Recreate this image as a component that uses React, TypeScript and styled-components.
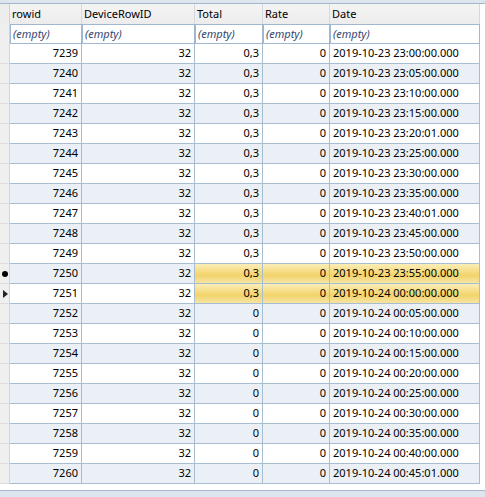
import React from "react";
import styled, { createGlobalStyle, css } from "styled-components";

const GlobalStyle = createGlobalStyle`
  html, body { margin: 0; padding: 0; background: #ffffff; }
  body { font-family: "Noto Sans", "Open Sans", sans-serif; font-size: 11px; color: #000; }
`;

const Frame = styled.div`
  width: 485px;
  height: 497px;
  display: flex;
  flex-direction: column;
  background: #ffffff;
  overflow: hidden;
`;

const TopStrip = styled.div`
  height: 3px;
  background: #dde5ee;
  border-bottom: 1px solid #a5b6c8;
`;

const Grid = styled.div`
  display: grid;
  grid-template-columns: 10px 72px 113px 68px 67px 150px;
  width: 480px;
`;

const HeaderCell = styled.div<{ $indicator?: boolean }>`
  box-sizing: border-box;
  height: 20px;
  line-height: 19px;
  padding-left: 2px;
  background: linear-gradient(#f4f4f4, #ececec);
  border-right: 1px solid #d5d9de;
  white-space: nowrap;
  overflow: hidden;
  ${(p) => p.$indicator && css`background: #ededed; border-right: 1px solid #d2d2d2;`}
`;

const FilterCell = styled.div<{ $indicator?: boolean }>`
  box-sizing: border-box;
  height: 20px;
  line-height: 18px;
  padding-left: 2px;
  background: #ffffff;
  border: 1px solid #9fb7cf;
  font-style: italic;
  color: #34456f;
  white-space: nowrap;
  overflow: hidden;
  ${(p) => p.$indicator && css`background: #efefef; border: none; border-right: 1px solid #d2d2d2;`}
`;

const IndicatorCell = styled.div`
  box-sizing: border-box;
  height: 20px;
  background: #efefef;
  border-right: 1px solid #d4d4d4;
  border-bottom: 1px solid #dcdcdc;
  display: flex;
  align-items: center;
  justify-content: center;
  font-size: 9px;
  line-height: 1;
`;

const DataCell = styled.div<{ $alt: boolean; $right?: boolean; $hl?: boolean }>`
  box-sizing: border-box;
  height: 20px;
  line-height: 18px;
  padding: 0 3px;
  background: ${(p) => (p.$alt ? "#eaf0f6" : "#ffffff")};
  border-right: 1px solid #a9bdd1;
  border-bottom: 1px solid #a9bdd1;
  text-align: ${(p) => (p.$right ? "right" : "left")};
  white-space: nowrap;
  overflow: hidden;
  ${(p) =>
    p.$hl &&
    css`
      background: linear-gradient(#fbeeb8 0%, #f5da7c 45%, #f2d46c 60%, #f7e4a4 100%);
    `}
`;

const Dot = styled.span`
  display: block;
  width: 6px;
  height: 6px;
  border-radius: 50%;
  background: #000;
`;

const Tri = styled.span`
  display: block;
  width: 0;
  height: 0;
  border-top: 4px solid transparent;
  border-bottom: 4px solid transparent;
  border-left: 5px solid #222;
  margin-left: 1px;
`;

const Spacer = styled.div`
  flex: 1;
`;

const Footer = styled.div`
  height: 6px;
  background: #dde6ef;
  border-top: 1px solid #a9b9ca;
`;

type Row = { id: number; total: string; date: string };

const dates = [
  "2019-10-23 23:00:00.000",
  "2019-10-23 23:05:00.000",
  "2019-10-23 23:10:00.000",
  "2019-10-23 23:15:00.000",
  "2019-10-23 23:20:01.000",
  "2019-10-23 23:25:00.000",
  "2019-10-23 23:30:00.000",
  "2019-10-23 23:35:00.000",
  "2019-10-23 23:40:01.000",
  "2019-10-23 23:45:00.000",
  "2019-10-23 23:50:00.000",
  "2019-10-23 23:55:00.000",
  "2019-10-24 00:00:00.000",
  "2019-10-24 00:05:00.000",
  "2019-10-24 00:10:00.000",
  "2019-10-24 00:15:00.000",
  "2019-10-24 00:20:00.000",
  "2019-10-24 00:25:00.000",
  "2019-10-24 00:30:00.000",
  "2019-10-24 00:35:00.000",
  "2019-10-24 00:40:00.000",
  "2019-10-24 00:45:01.000",
];

const rows: Row[] = dates.map((d, i) => ({
  id: 7239 + i,
  total: 7239 + i <= 7251 ? "0,3" : "0",
  date: d,
}));

const headers = ["rowid", "DeviceRowID", "Total", "Rate", "Date"];

export default function App() {
  return (
    <>
      <GlobalStyle />
      <Frame>
        <TopStrip />
        <Grid>
          <HeaderCell $indicator />
          {headers.map((h) => (
            <HeaderCell key={h}>{h}</HeaderCell>
          ))}
          <FilterCell $indicator />
          {headers.map((h) => (
            <FilterCell key={h}>(empty)</FilterCell>
          ))}
          {rows.map((r, i) => {
            const alt = i % 2 === 1;
            const hl = r.id === 7250 || r.id === 7251;
            return (
              <React.Fragment key={r.id}>
                <IndicatorCell>
                  {r.id === 7250 ? <Dot /> : r.id === 7251 ? <Tri /> : null}
                </IndicatorCell>
                <DataCell $alt={alt} $right>{r.id}</DataCell>
                <DataCell $alt={alt} $right>32</DataCell>
                <DataCell $alt={alt} $right $hl={hl}>{r.total}</DataCell>
                <DataCell $alt={alt} $right $hl={hl}>0</DataCell>
                <DataCell $alt={alt} $hl={hl}>{r.date}</DataCell>
              </React.Fragment>
            );
          })}
        </Grid>
        <Spacer />
        <Footer />
      </Frame>
    </>
  );
}
